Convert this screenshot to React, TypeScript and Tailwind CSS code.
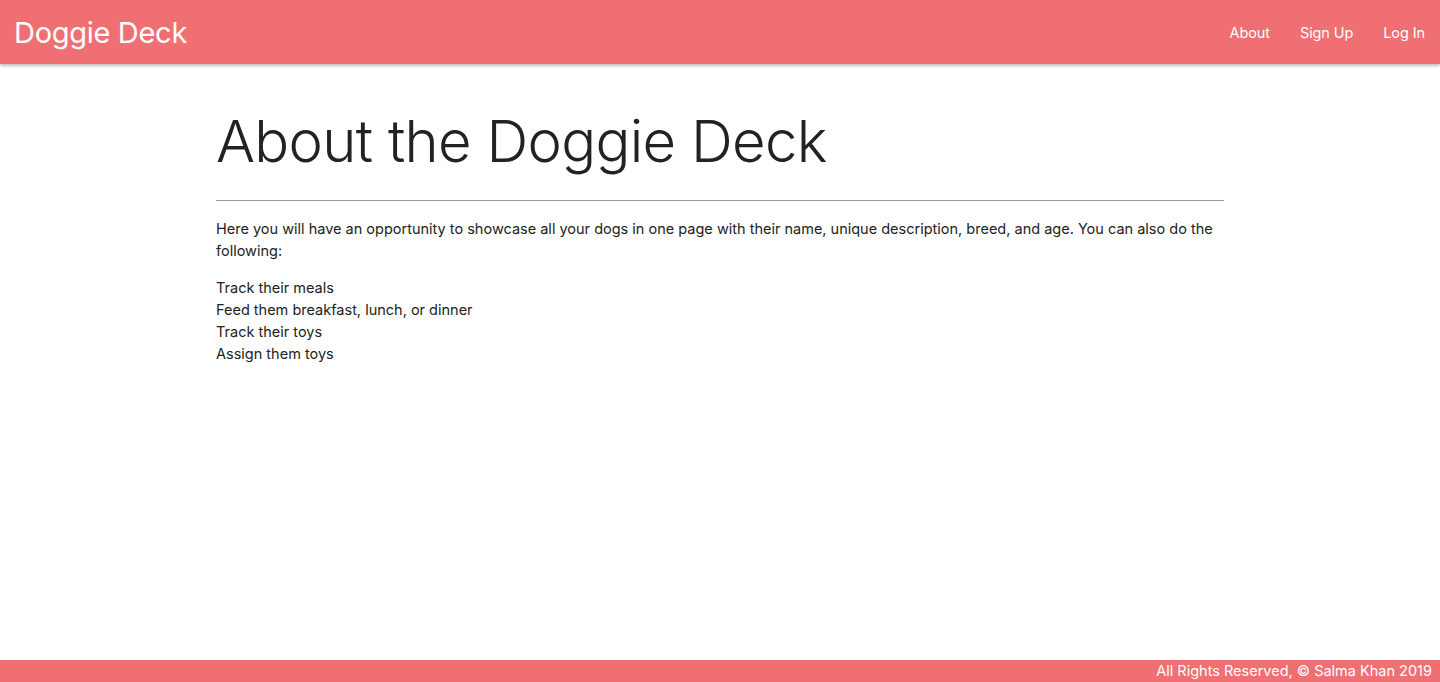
import React from "react";

export default function App() {
  const links = ["About", "Sign Up", "Log In"];
  const items = [
    "Track their meals",
    "Feed them breakfast, lunch, or dinner",
    "Track their toys",
    "Assign them toys",
  ];

  return (
    <div className="flex min-h-[682px] flex-col bg-white font-['Inter','Noto_Sans',sans-serif] text-[#222]">
      {/* NAV */}
      <nav className="relative z-10 flex h-16 items-center justify-between bg-[#ef6f73] shadow-[0_2px_3px_rgba(0,0,0,0.25)]">
        <a href="#" className="pl-[14px] text-[29px] leading-none tracking-[-0.3px] text-white">
          Doggie Deck
        </a>
        <ul className="flex h-full items-center pt-[2px]">
          {links.map((l) => (
            <li key={l}>
              <a href="#" className="block px-[15px] text-[14.5px] tracking-[-0.1px] text-white">
                {l}
              </a>
            </li>
          ))}
        </ul>
      </nav>

      {/* MAIN */}
      <main className="mx-auto w-[1008px] flex-1">
        <h1 className="mt-[41px] text-[58px] font-light leading-[72px] tracking-[-0.7px] text-[#222]">
          About the Doggie Deck
        </h1>
        <hr className="mt-[23px] border-t border-[#999]" />
        <p className="mt-[17px] text-[14.5px] leading-[22px]">
          Here you will have an opportunity to showcase all your dogs in one page with their name, unique
          description, breed, and age. You can also do the following:
        </p>
        <ul className="mt-[15px] text-[14.5px] leading-[22px]">
          {items.map((i) => (
            <li key={i}>{i}</li>
          ))}
        </ul>
      </main>

      {/* FOOTER */}
      <footer className="flex h-[22px] items-center justify-end bg-[#ef6f73] pr-[8px] text-[14.5px] text-white">
        All Rights Reserved, © Salma Khan 2019
      </footer>
    </div>
  );
}
